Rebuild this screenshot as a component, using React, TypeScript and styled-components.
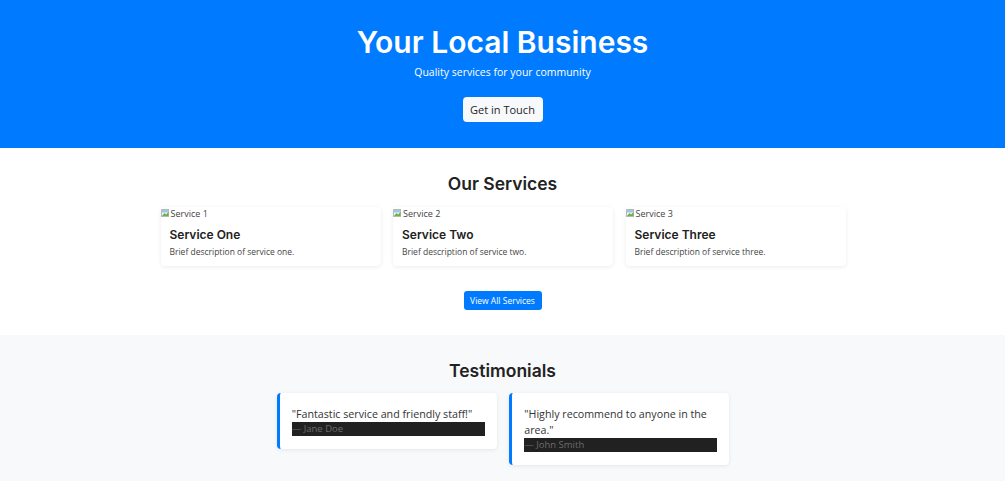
import React from "react";
import styled, { createGlobalStyle } from "styled-components";

const Global = createGlobalStyle`
  html, body { margin: 0; padding: 0; background: #ffffff; }
  body { font-family: "Open Sans", "Liberation Sans", sans-serif; color: #333; }
  * { box-sizing: border-box; }
`;

const headingFont = `"Inter", "Liberation Sans", sans-serif`;

const Hero = styled.header`
  background: #007bff;
  color: #fff;
  height: 148px;
  display: flex;
  flex-direction: column;
  align-items: center;
  padding-top: 22px;
`;

const HeroTitle = styled.h1`
  margin: 0;
  font-family: ${headingFont};
  font-weight: 600;
  font-size: 30px;
  line-height: 40px;
`;

const HeroSub = styled.p`
  margin: 2px 0 0;
  font-size: 10.5px;
  line-height: 16px;
`;

const LightButton = styled.button`
  margin-top: 17px;
  background: #f8f9fa;
  color: #212529;
  border: none;
  border-radius: 4px;
  height: 25px;
  width: 80px;
  padding: 0;
  font-family: "Open Sans", sans-serif;
  font-size: 11px;
`;

const Section = styled.section<{ $bg?: string; $h: number }>`
  background: ${(p) => p.$bg || "#fff"};
  height: ${(p) => p.$h}px;
  display: flex;
  flex-direction: column;
  align-items: center;
  padding-top: 24px;
`;

const SectionTitle = styled.h2`
  margin: 0;
  font-family: ${headingFont};
  font-weight: 600;
  font-size: 17.5px;
  line-height: 24px;
  color: #222;
`;

const Grid = styled.div<{ $cols: number; $top: number }>`
  display: grid;
  grid-template-columns: repeat(${(p) => p.$cols}, 220px);
  column-gap: 12.5px;
  margin-top: ${(p) => p.$top}px;
  margin-left: 1px;
  align-items: start;
`;

const ServiceCard = styled.div`
  background: #fff;
  border-radius: 4px;
  box-shadow: 0 1px 4px rgba(0, 0, 0, 0.08);
  height: 59px;
  overflow: hidden;
`;

const Alt = styled.div`
  display: flex;
  align-items: center;
  height: 12px;
  font-size: 9px;
  color: #444;
  gap: 1px;
`;

const CardBody = styled.div`
  padding: 8px 9px 0;
`;

const CardTitle = styled.h3`
  margin: 0;
  font-family: ${headingFont};
  font-weight: 600;
  font-size: 12px;
  line-height: 16px;
  color: #222;
`;

const CardText = styled.p`
  margin: 2px 0 0;
  font-size: 8.5px;
  line-height: 13px;
  color: #444;
`;

const BlueButton = styled.button`
  margin-top: 25px;
  background: #007bff;
  color: #fff;
  border: none;
  border-radius: 3px;
  height: 19px;
  width: 78px;
  padding: 0;
  font-family: "Open Sans", sans-serif;
  font-size: 8.5px;
`;

const TestimonialCard = styled.div`
  background: #fff;
  border-left: 3px solid #007bff;
  border-radius: 4px;
  box-shadow: 0 1px 4px rgba(0, 0, 0, 0.08);
  padding: 13px 12px 13px;
`;

const Quote = styled.p`
  margin: 0;
  font-size: 10.7px;
  line-height: 16px;
  color: #333;
`;

const Author = styled.footer`
  background: #212121;
  color: #6c6c6c;
  font-size: 9.5px;
  line-height: 14px;
  margin-top: 0;
`;

const BrokenIcon = () => (
  <svg width="9" height="10" viewBox="0 0 9 10">
    <rect x="0.5" y="1.5" width="7" height="7" fill="#f3f3f3" stroke="#b8b8b8" />
    <path d="M1 8 L3.5 5 L5 6.5 L7.5 4 L7.5 8 Z" fill="#6bb24a" />
    <rect x="1" y="2" width="6" height="2.5" fill="#9cc8e8" />
  </svg>
);

const services = [
  { alt: "Service 1", title: "Service One", text: "Brief description of service one." },
  { alt: "Service 2", title: "Service Two", text: "Brief description of service two." },
  { alt: "Service 3", title: "Service Three", text: "Brief description of service three." },
];

const testimonials = [
  { quote: '"Fantastic service and friendly staff!"', author: "— Jane Doe" },
  { quote: '"Highly recommend to anyone in the area."', author: "— John Smith" },
];

export default function App() {
  return (
    <>
      <Global />
      <Hero>
        <HeroTitle>Your Local Business</HeroTitle>
        <HeroSub>Quality services for your community</HeroSub>
        <LightButton>Get in Touch</LightButton>
      </Hero>
      <Section $h={187}>
        <SectionTitle>Our Services</SectionTitle>
        <Grid $cols={3} $top={11}>
          {services.map((s) => (
            <ServiceCard key={s.alt}>
              <Alt>
                <BrokenIcon />
                {s.alt}
              </Alt>
              <CardBody>
                <CardTitle>{s.title}</CardTitle>
                <CardText>{s.text}</CardText>
              </CardBody>
            </ServiceCard>
          ))}
        </Grid>
        <BlueButton>View All Services</BlueButton>
      </Section>
      <Section $bg="#f8f9fa" $h={146}>
        <SectionTitle>Testimonials</SectionTitle>
        <Grid $cols={2} $top={10}>
          {testimonials.map((t) => (
            <TestimonialCard key={t.author}>
              <Quote>{t.quote}</Quote>
              <Author>{t.author}</Author>
            </TestimonialCard>
          ))}
        </Grid>
      </Section>
    </>
  );
}
